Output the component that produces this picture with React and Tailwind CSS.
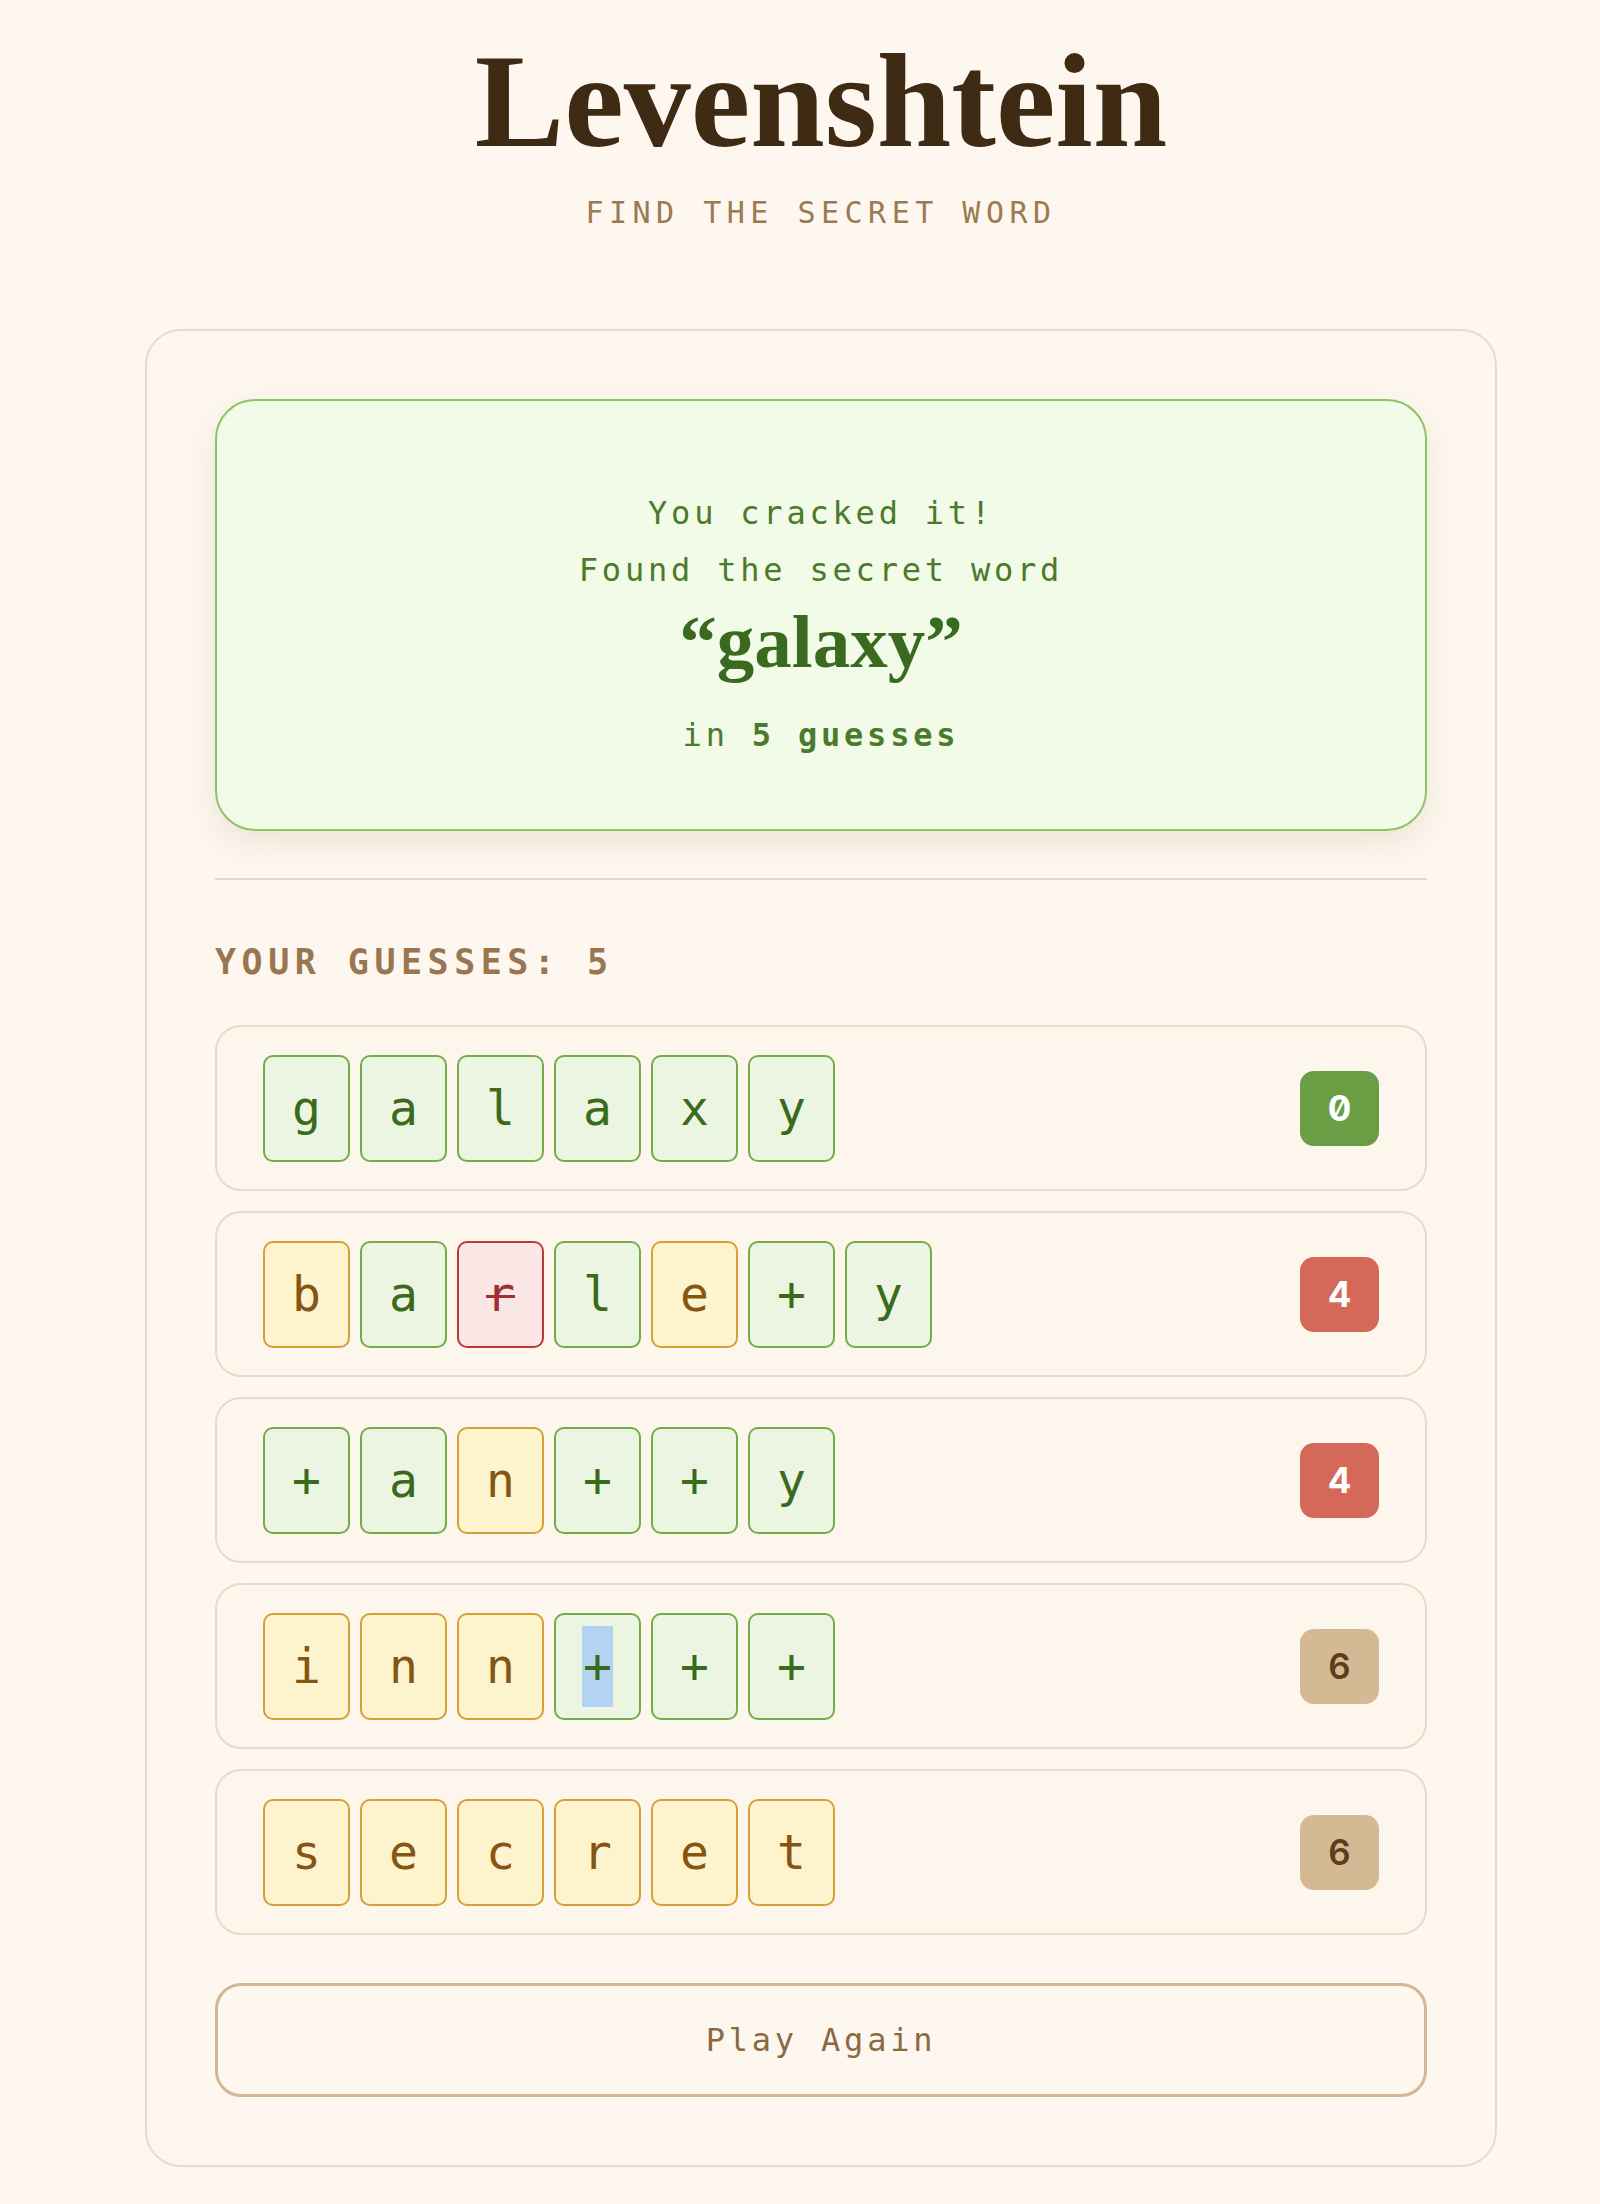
import React from "react";

const MONO = "font-['DejaVu_Sans_Mono',monospace]";
const SERIF = "font-['Liberation_Serif',serif]";

const tileStyles = {
  hit: "bg-[#ecf5e1] border-[#74ad47] text-[#3a6a1c]",
  near: "bg-[#fdf3cc] border-[#d6a036] text-[#855514]",
  miss: "bg-[#f9e6e5] border-[#bf3838] text-[#a02f2f]",
};

const badgeStyles = {
  solved: "bg-[#699e44] text-white font-bold",
  far: "bg-[#d4695a] text-white font-bold",
  cold: "bg-[#d5b995] text-[#5e3d1d] font-semibold",
};

const guesses = [
  {
    tiles: [["g", "hit"], ["a", "hit"], ["l", "hit"], ["a", "hit"], ["x", "hit"], ["y", "hit"]],
    score: "0",
    tone: "solved",
  },
  {
    tiles: [["b", "near"], ["a", "hit"], ["r", "miss"], ["l", "hit"], ["e", "near"], ["+", "hit"], ["y", "hit"]],
    score: "4",
    tone: "far",
  },
  {
    tiles: [["+", "hit"], ["a", "hit"], ["n", "near"], ["+", "hit"], ["+", "hit"], ["y", "hit"]],
    score: "4",
    tone: "far",
  },
  {
    tiles: [["i", "near"], ["n", "near"], ["n", "near"], ["+", "hit", true], ["+", "hit"], ["+", "hit"]],
    score: "6",
    tone: "cold",
  },
  {
    tiles: [["s", "near"], ["e", "near"], ["c", "near"], ["r", "near"], ["e", "near"], ["t", "near"]],
    score: "6",
    tone: "cold",
  },
];

function Tile({ ch, kind, selected }) {
  return (
    <div
      className={`flex h-[107px] w-[87px] items-center justify-center rounded-[10px] border-2 text-[48px] leading-none ${MONO} ${tileStyles[kind]}`}
    >
      {selected ? (
        <span className="inline-flex h-[81px] w-[31px] items-center justify-center bg-[#b3d3f3]">{ch}</span>
      ) : kind === "miss" ? (
        <span className="line-through decoration-[#a02f2f] decoration-[3px]">{ch}</span>
      ) : (
        ch
      )}
    </div>
  );
}

function GuessRow({ tiles, score, tone }) {
  return (
    <div className="flex h-[166px] items-center justify-between rounded-[26px] border-2 border-[#e8dcc9] bg-[#fcf6ed] px-[46px]">
      <div className="flex gap-[10px]">
        {tiles.map(([ch, kind, selected], i) => (
          <Tile key={i} ch={ch} kind={kind} selected={selected} />
        ))}
      </div>
      <div
        className={`flex h-[75px] w-[79px] items-center justify-center rounded-[14px] font-['Inter',sans-serif] text-[35px] slashed-zero ${badgeStyles[tone]}`}
      >
        {score}
      </div>
    </div>
  );
}

export default function App() {
  return (
    <div className="min-h-[2204px] bg-[#fdf7ef] pl-[42px]">
      <div className="flex flex-col items-center pt-[34px]">
        <h1 className={`${SERIF} text-[134px] font-bold leading-none text-[#3f2a13]`}>Levenshtein</h1>
        <p className={`${MONO} mt-[27px] text-[30px] leading-[36px] tracking-[5.5px] text-[#9b7a52]`}>
          FIND THE SECRET WORD
        </p>

        <div className="mt-[98px] w-[1352px] rounded-[36px] border-2 border-[#e8dcc9] bg-[#fdf7ef] p-[68px]">
          {/* win banner */}
          <div
            className={`${MONO} flex h-[432px] flex-col items-center rounded-[40px] border-2 border-[#8cc463] bg-[#f2fae8] pt-[84px] text-[32px] tracking-[3.8px] text-[#4a7a2a] shadow-[0_12px_32px_rgba(140,110,60,0.13)]`}
          >
            <p className="leading-[57px]">You cracked it!</p>
            <p className="leading-[57px]">Found the secret word</p>
            <p className={`${SERIF} mt-[5px] text-[75px] font-bold leading-none tracking-normal text-[#3a6a1f]`}>
              “galaxy”
            </p>
            <p className="mt-[28px] leading-[57px]">
              in <span className="font-bold">5 guesses</span>
            </p>
          </div>

          <div className="mt-[47px] h-[2px] bg-[#e6d9c4]" />

          <p className={`${MONO} mt-[62px] text-[35px] font-bold leading-[40px] tracking-[5.5px] text-[#9a7650]`}>
            YOUR GUESSES: 5
          </p>

          <div className="mt-[43px] flex flex-col gap-[20px]">
            {guesses.map((g, i) => (
              <GuessRow key={i} {...g} />
            ))}
          </div>

          <button
            className={`${MONO} mt-[48px] flex h-[114px] w-full items-center justify-center rounded-[26px] border-[3px] border-[#d4b896] bg-transparent text-[32px] tracking-[3.8px] text-[#8b6a42]`}
          >
            Play Again
          </button>
        </div>
      </div>
    </div>
  );
}
